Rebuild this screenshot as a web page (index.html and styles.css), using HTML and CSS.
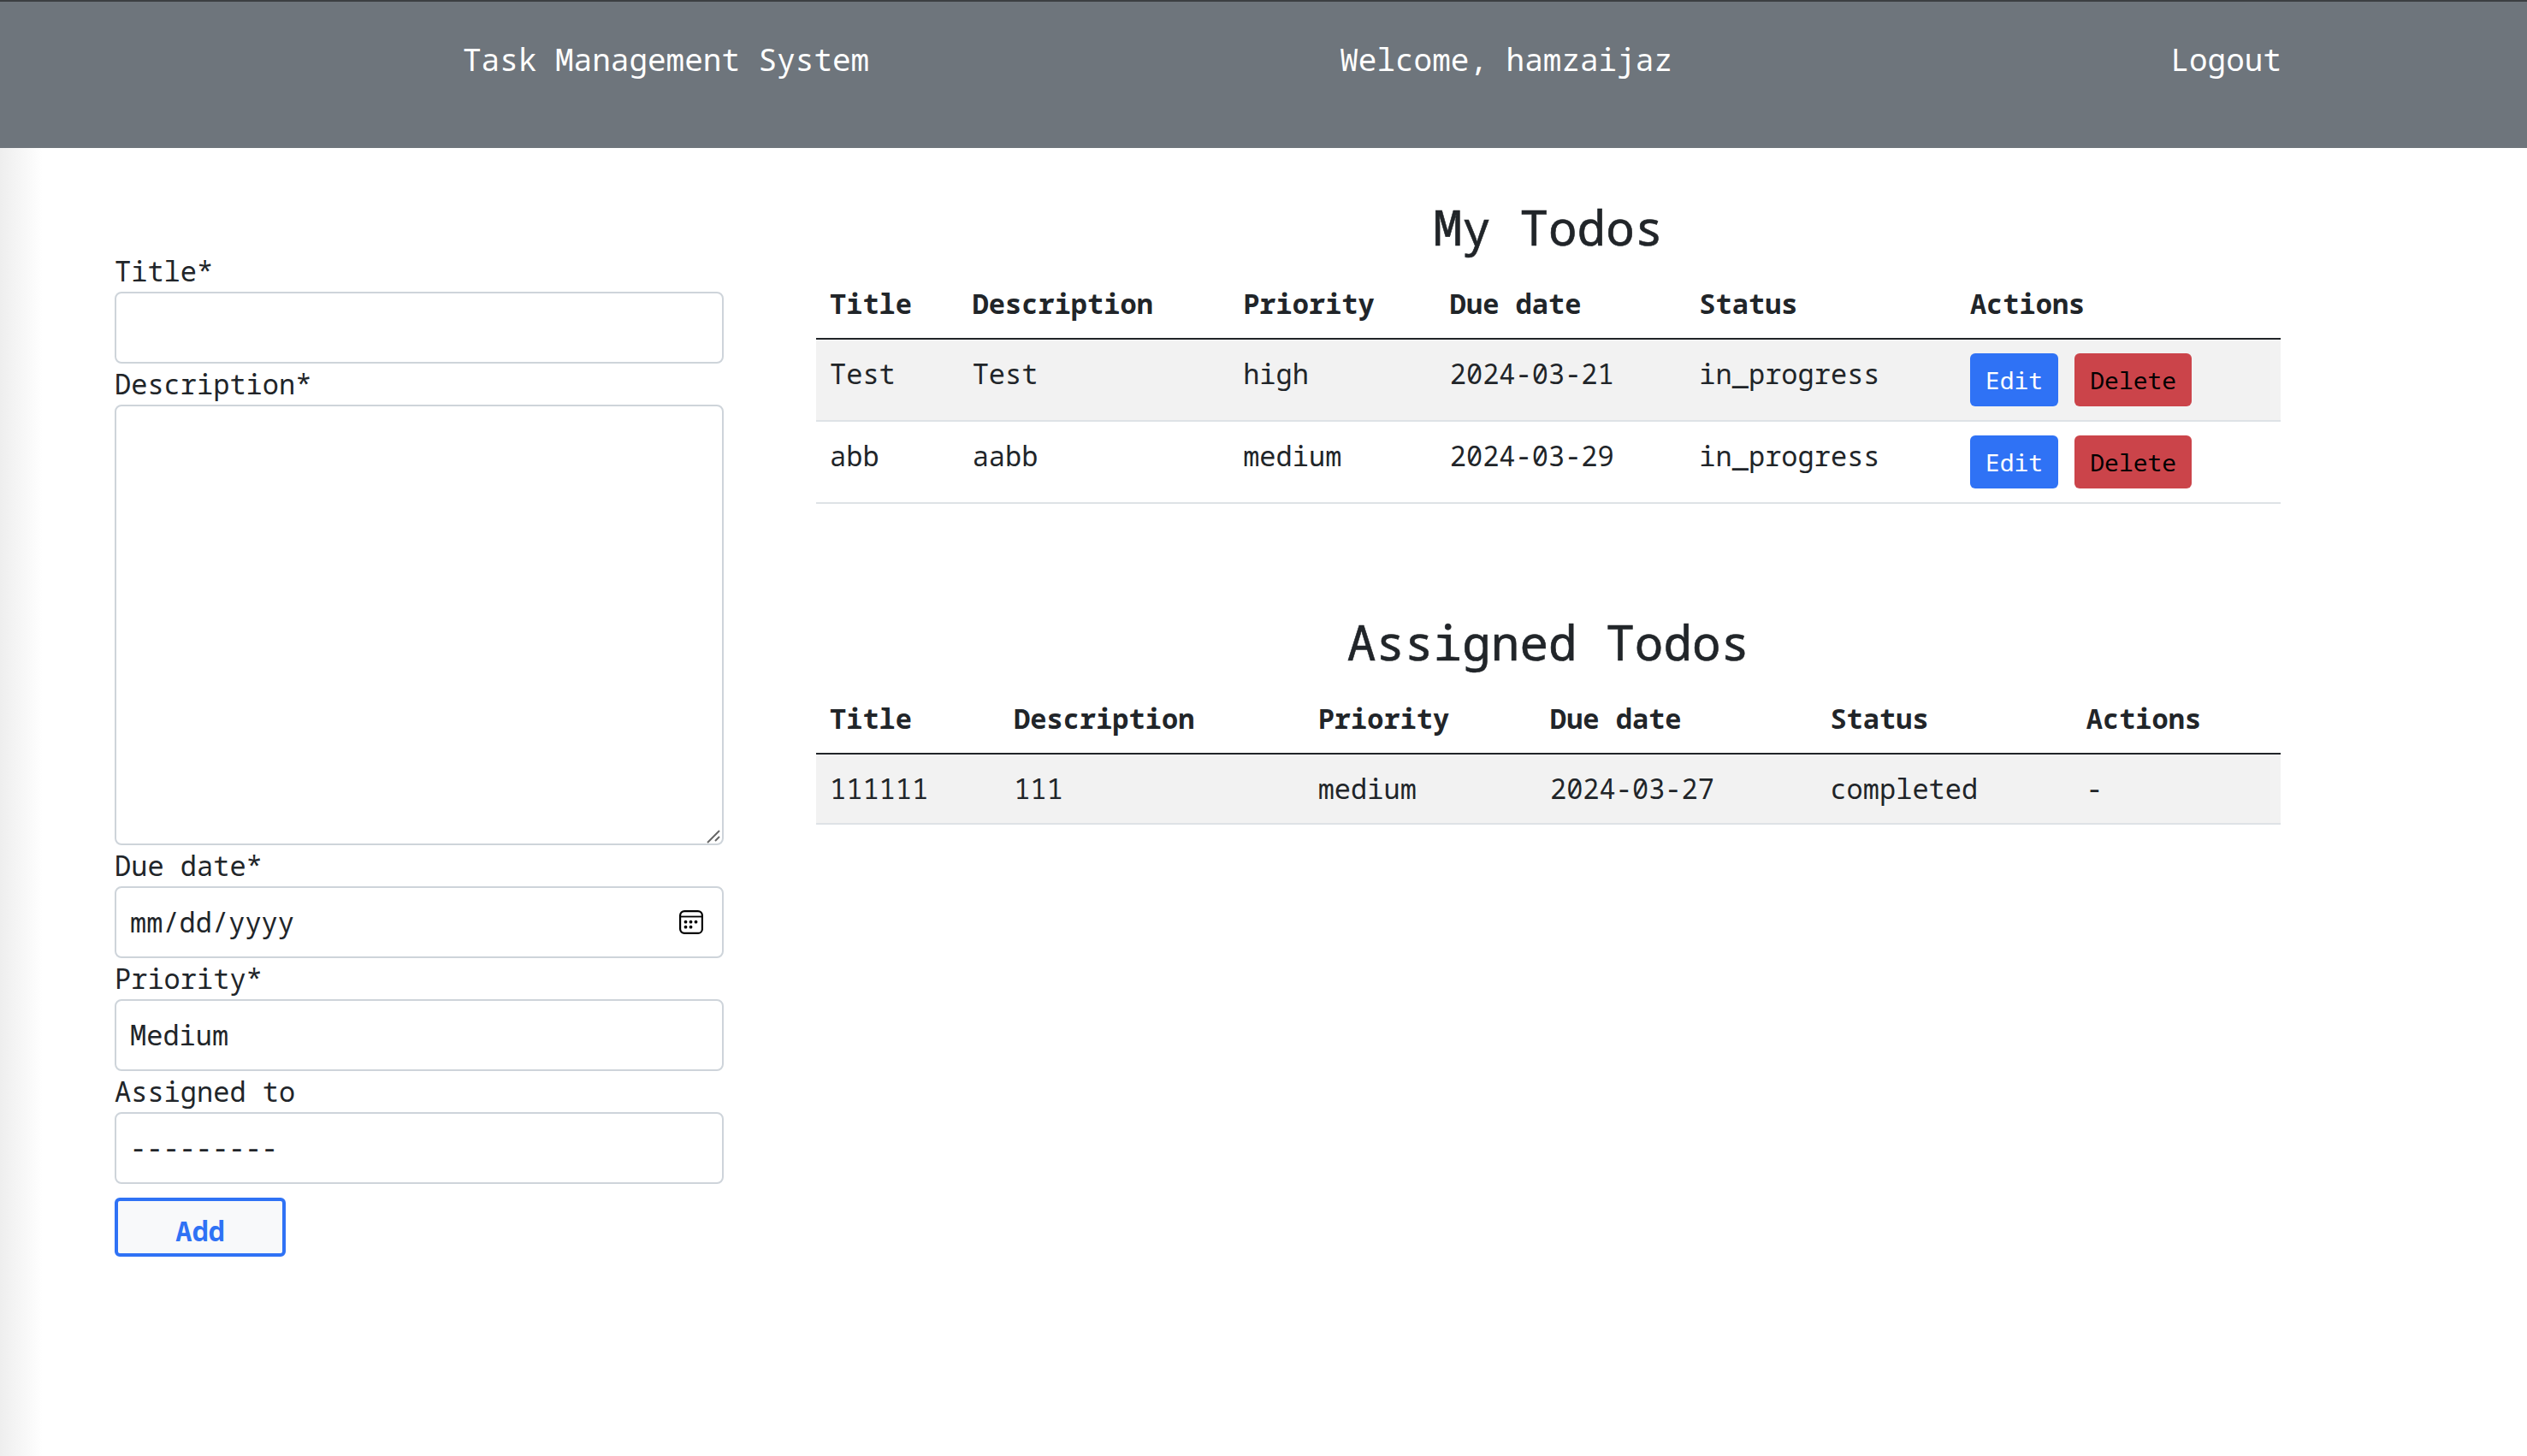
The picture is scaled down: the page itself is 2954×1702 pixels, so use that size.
FILE: index.html
```html
<!DOCTYPE html>
<html>
<head>
  <meta charset="utf-8">
  <title>Task Management System</title>
  <link rel="stylesheet" href="styles.css">
</head>
<body>
  <header class="navbar">
    <a class="nav-title">Task Management System</a>
    <span class="nav-welcome">Welcome, hamzaijaz</span>
    <a class="nav-logout">Logout</a>
  </header>

  <main class="content">
    <form class="todo-form">
      <label for="title">Title*</label>
      <input class="field" id="title" type="text">

      <label for="description">Description*</label>
      <div class="field-wrap">
        <textarea class="field field-area" id="description"></textarea>
        <!-- resize handle -->
        <svg class="area-grip" width="16" height="16" viewBox="0 0 16 16">
          <path d="M1 15L15 1M10 13L15 8" fill="none" stroke="#666" stroke-width="2"/>
        </svg>
      </div>

      <label for="due">Due date*</label>
      <div class="field-wrap">
        <input class="field" id="due" type="date">
        <!-- calendar icon -->
        <svg class="date-icon" width="28" height="28" viewBox="0 0 28 28">
          <rect x="1.1" y="1.1" width="25.8" height="25.8" rx="5" fill="none" stroke="#000" stroke-width="2.2"/>
          <path d="M1 7.5H27" stroke="#000" stroke-width="1.8"/>
          <circle cx="7.5" cy="13.7" r="1.9"/>
          <circle cx="13.5" cy="13.7" r="1.9"/>
          <circle cx="19.5" cy="13.7" r="1.9"/>
          <circle cx="7.5" cy="19.7" r="1.9"/>
          <circle cx="13.5" cy="19.7" r="1.9"/>
        </svg>
      </div>

      <label for="priority">Priority*</label>
      <select class="field" id="priority">
        <option>Medium</option>
      </select>

      <label for="assigned">Assigned to</label>
      <select class="field" id="assigned">
        <option>---------</option>
      </select>

      <button class="add-btn" type="button">Add</button>
    </form>

    <div class="lists">
      <section class="todo-section">
        <h3>My Todos</h3>
        <table>
          <thead>
            <tr>
              <th>Title</th>
              <th>Description</th>
              <th>Priority</th>
              <th>Due date</th>
              <th>Status</th>
              <th>Actions</th>
            </tr>
          </thead>
          <tbody>
            <tr>
              <td>Test</td>
              <td>Test</td>
              <td>high</td>
              <td>2024-03-21</td>
              <td>in_progress</td>
              <td><button class="btn btn-edit">Edit</button> <button class="btn btn-delete">Delete</button></td>
            </tr>
            <tr>
              <td>abb</td>
              <td>aabb</td>
              <td>medium</td>
              <td>2024-03-29</td>
              <td>in_progress</td>
              <td><button class="btn btn-edit">Edit</button> <button class="btn btn-delete">Delete</button></td>
            </tr>
          </tbody>
        </table>
      </section>

      <section class="todo-section">
        <h3>Assigned Todos</h3>
        <table>
          <thead>
            <tr>
              <th>Title</th>
              <th>Description</th>
              <th>Priority</th>
              <th>Due date</th>
              <th>Status</th>
              <th>Actions</th>
            </tr>
          </thead>
          <tbody>
            <tr>
              <td>111111</td>
              <td>111</td>
              <td>medium</td>
              <td>2024-03-27</td>
              <td>completed</td>
              <td>-</td>
            </tr>
          </tbody>
        </table>
      </section>
    </div>
  </main>
</body>
</html>
```

FILE: styles.css
```css
html, body {
  height: 100%;
  margin: 0;
}
body {
  display: flex;
  flex-direction: column;
  background-color: #fff;
  color: #212529;
  font-family: "Noto Sans Mono", "Liberation Mono", monospace;
  font-size: 32px;
  line-height: 48px;
  overflow: hidden;
}

.navbar {
  display: flex;
  box-sizing: border-box;
  height: 173px;
  padding: 41px 287px 0 541px;
  background: #6e757c;
  border-top: 2px solid #3c3f42;
  color: #fff;
  font-size: 36px;
  line-height: 54px;
}
.nav-welcome {
  margin-left: 550px;
}
.nav-logout {
  margin-left: auto;
}

.content {
  flex: 1;
  display: flex;
  gap: 108px;
  padding: 59px 288px 0 134px;
  background: linear-gradient(to right, #eee, #fff 50px);
}

.todo-form {
  display: flex;
  flex-direction: column;
  width: 712px;
  padding-top: 61px;
}
label {
  display: block;
  height: 48px;
}
.field {
  display: block;
  box-sizing: border-box;
  width: 100%;
  height: 84px;
  padding: 16px;
  background: #fff;
  border: 2px solid #ced4da;
  border-radius: 8px;
  color: #212529;
  font: inherit;
  appearance: none;
  outline: none;
}
.field-area {
  height: 515px;
  resize: none;
}
.field-wrap {
  position: relative;
}
.area-grip {
  position: absolute;
  right: 4px;
  bottom: 2px;
}
#due::-webkit-calendar-picker-indicator {
  display: none;
}
#due::-webkit-datetime-edit-month-field,
#due::-webkit-datetime-edit-day-field,
#due::-webkit-datetime-edit-year-field {
  padding: 0;
}
.date-icon {
  position: absolute;
  top: 28px;
  right: 24px;
}
.add-btn {
  width: 200px;
  height: 69px;
  margin-top: 16px;
  padding: 8px 0 0;
  background: #f8f9fa;
  border: 4px solid #2f72f5;
  border-radius: 6px;
  color: #2f72f5;
  font: inherit;
  font-weight: bold;
}

.lists {
  flex: 1;
}
.todo-section {
  margin-bottom: 128px;
}
h3 {
  margin: 0 0 16px;
  font-size: 56px;
  font-weight: normal;
  line-height: 67px;
  text-align: center;
  -webkit-text-stroke: 0.6px #212529;
}
table {
  width: 100%;
  border-collapse: collapse;
}
th, td {
  padding: 16px;
  text-align: left;
  vertical-align: top;
}
thead tr {
  border-bottom: 2px solid #212529;
}
tbody tr {
  border-bottom: 2px solid #dee2e6;
}
tbody tr:nth-child(odd) {
  background: #f2f2f2;
}
.btn {
  height: 62px;
  padding: 8px 16px;
  border: 2px solid transparent;
  border-radius: 6px;
  font: inherit;
  font-size: 28px;
  line-height: 42px;
}
.btn-edit {
  background: #2f72f5;
  color: #fff;
}
.btn-delete {
  background: #cb444a;
  color: #000;
}
```
